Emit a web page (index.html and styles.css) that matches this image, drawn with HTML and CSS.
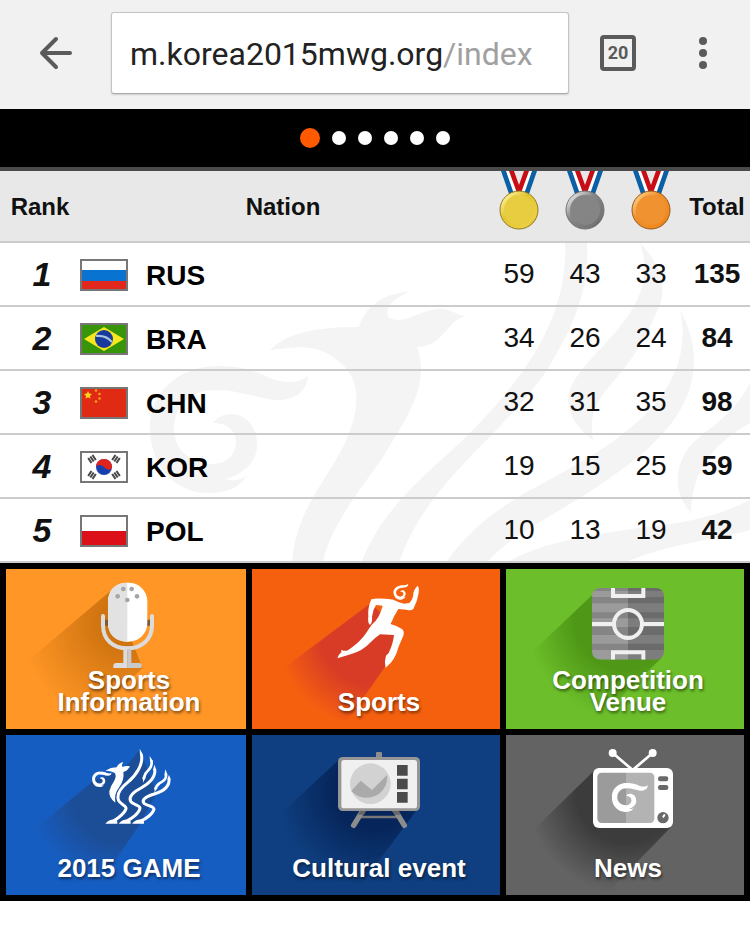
FILE: index.html
```html
<!DOCTYPE html>
<html lang="en">
<head>
    <meta charset="UTF-8">
    <meta name="viewport" content="width=device-width, initial-scale=1.0">
    <title>Korea 2015 MWG</title>
    <link rel="stylesheet" href="styles.css">
</head>
<body>
    <!-- shared swirl and medal ribbon shapes -->
    <svg class="defs" width="0" height="0" aria-hidden="true">
        <symbol id="swirl" viewBox="150 122 158 130">
            <path d="M308 133C300 140 285 141 270 135C250 125 230 121 205 124C170 130 150 155 150 185C150 222 175 250 208 250C228 250 240 244 246 233C240 238 230 238 226 236C245 230 258 218 257 200C256 180 243 171 231 171C223 171 216 175 213 180C228 180 236 188 236 199C236 212 226 221 213 221C190 221 174 206 174 186C174 162 192 147 215 147C240 147 255 155 275 157C295 158 307 148 308 133Z"/>
        </symbol>
        <symbol id="ribbon" viewBox="0 0 40 24">
            <path fill="#fff" d="M3 0H14L20 19L26 0H37L28 24H12Z"/>
            <path fill="#0b5fa5" d="M2 0H7L15 23H10ZM38 0H33L25 23H30Z"/>
            <path fill="#c80d14" d="M10 0H15L20 14L25 0H30L22 22H18Z"/>
        </symbol>
    </svg>

    <header class="toolbar">
        <button class="tool back" aria-label="Back">
            <svg width="34" height="34" viewBox="0 0 34 34" fill="none" stroke="#5a5a5a" stroke-width="4" stroke-linecap="round" stroke-linejoin="round">
                <path d="M31 17H3M17 3L3 17L17 31"/>
            </svg>
        </button>
        <label class="address">
            <input class="host" type="text" value="m.korea2015mwg.org" aria-label="Address">
            <span class="path">/index</span>
        </label>
        <button class="tool tabs" aria-label="Open tabs"><span class="count">20</span></button>
        <button class="tool menu" aria-label="Menu">
            <svg width="8" height="32" viewBox="0 0 8 32" fill="#5a5a5a">
                <circle cx="4" cy="4" r="4"/><circle cx="4" cy="16" r="4"/><circle cx="4" cy="28" r="4"/>
            </svg>
        </button>
    </header>

    <nav class="slider" aria-label="Slides">
        <button class="dot active" aria-label="Slide 1"></button>
        <button class="dot" aria-label="Slide 2"></button>
        <button class="dot" aria-label="Slide 3"></button>
        <button class="dot" aria-label="Slide 4"></button>
        <button class="dot" aria-label="Slide 5"></button>
        <button class="dot" aria-label="Slide 6"></button>
    </nav>

    <main>
        <div class="standings">
            <svg class="watermark" viewBox="0 0 750 320" fill="#f4f4f4" aria-hidden="true">
                <use href="#swirl" x="150" y="122" width="158" height="130"/>
                <path d="M270 107C285 92 310 84 359 84C364 66 380 51 411 48C392 56 385 64 388 74C403 84 420 66 440 66C452 66 458 73 466 73C446 77 444 104 417 104C430 140 410 170 383 214C350 260 328 290 323 320H292C295 270 325 240 343 204C362 165 365 128 324 109C308 102 295 104 270 107Z"/>
                <path d="M565 0H587C590 50 570 90 545 130C500 195 425 240 399 320H361C375 285 395 260 430 227C500 165 570 90 565 0Z"/>
                <path d="M640 0C664 25 668 50 656 70C640 110 620 130 604 150C592 165 590 180 593 197C573 183 566 165 569 150C580 110 665 70 640 0Z"/>
                <path d="M680 67C698 100 698 130 684 160C664 200 620 230 565 264C530 285 510 295 486 320H446C462 295 490 270 525 250C600 210 700 160 680 67Z"/>
                <path d="M750 140V180C715 200 692 225 691 270C678 255 672 235 684 212C695 190 730 180 750 140Z"/>
                <path d="M506 320C540 300 580 294 644 284C690 280 720 272 750 257V287C710 298 670 300 624 320Z"/>
            </svg>
            <table class="ranking">
                <colgroup>
                    <col class="col-rank"><col class="col-flag"><col>
                    <col class="col-num"><col class="col-num"><col class="col-num"><col class="col-num">
                </colgroup>
                <thead>
                    <tr>
                        <th>Rank</th>
                        <th colspan="2">Nation</th>
                        <th class="medal">
                            <svg width="40" height="60" viewBox="0 0 40 60" role="img" aria-label="Gold">
                                <defs><linearGradient id="gold" x1="0" y1="0" x2="1" y2="1"><stop offset="0.100" stop-color="#fff3a0"/><stop offset=".4" stop-color="#e2c532"/><stop offset=".8" stop-color="#ecd043"/><stop offset="1" stop-color="#b38a10"/></linearGradient></defs>
                                <use href="#ribbon" width="40" height="24"/>
                                <circle cx="20" cy="39" r="19" fill="url(#gold)" stroke="#8f7a22"/>
                                <circle cx="20" cy="39" r="15" fill="#e8cd40"/>
                            </svg>
                        </th>
                        <th class="medal">
                            <svg width="40" height="60" viewBox="0 0 40 60" role="img" aria-label="Silver">
                                <defs><linearGradient id="silver" x1="0" y1="0" x2="1" y2="1"><stop offset=".1" stop-color="#eee"/><stop offset=".4" stop-color="#888"/><stop offset=".8" stop-color="#757575"/><stop offset="1" stop-color="#444"/></linearGradient></defs>
                                <use href="#ribbon" width="40" height="24"/>
                                <circle cx="20" cy="39" r="19" fill="url(#silver)" stroke="#707070"/>
                                <circle cx="20" cy="39" r="15" fill="#858585"/>
                            </svg>
                        </th>
                        <th class="medal">
                            <svg width="40" height="60" viewBox="0 0 40 60" role="img" aria-label="Bronze">
                                <defs><linearGradient id="bronze" x1="0" y1="0" x2="1" y2="1"><stop offset=".1" stop-color="#ffd08a"/><stop offset=".4" stop-color="#f0902c"/><stop offset=".8" stop-color="#f08a20"/><stop offset="1" stop-color="#b85c08"/></linearGradient></defs>
                                <use href="#ribbon" width="40" height="24"/>
                                <circle cx="20" cy="39" r="19" fill="url(#bronze)" stroke="#96581c"/>
                                <circle cx="20" cy="39" r="15" fill="#f09230"/>
                            </svg>
                        </th>
                        <th>Total</th>
                    </tr>
                </thead>
                <tbody>
                    <tr>
                        <td class="rank">1</td>
                        <td class="flag">
                            <svg width="48" height="32" viewBox="0 0 48 32"><path fill="#fff" d="M0 0h48v11H0z"/><path fill="#0873d0" d="M0 11h48v11H0z"/><path fill="#e0281c" d="M0 22h48v10H0z"/><path fill="none" stroke="#777" stroke-width="2" d="M1 1h46v30H1z"/></svg>
                        </td>
                        <td class="name">RUS</td>
                        <td>59</td><td>43</td><td>33</td><td class="total">135</td>
                    </tr>
                    <tr>
                        <td class="rank">2</td>
                        <td class="flag">
                            <svg width="48" height="32" viewBox="0 0 48 32"><path fill="#389408" d="M0 0h48v32H0z"/><path fill="#f8e81c" d="M4 16L24 4L44 16L24 28z"/><circle cx="24" cy="16" r="9" fill="#173a9e"/><path fill="none" stroke="#a9c4dc" stroke-width="2" d="M16 13Q26 12 32 19"/><path fill="none" stroke="#777" stroke-width="2" d="M1 1h46v30H1z"/></svg>
                        </td>
                        <td class="name">BRA</td>
                        <td>34</td><td>26</td><td>24</td><td class="total">84</td>
                    </tr>
                    <tr>
                        <td class="rank">3</td>
                        <td class="flag">
                            <svg width="48" height="32" viewBox="0 0 48 32"><path fill="#e12a14" d="M0 0h48v32H0z"/><path fill="#ffd21c" d="M8 4l1.200 2.600 2.800.3-2.100 2 .6 2.800L8 10.300l-2.500 1.400.6-2.800-2.100-2 2.800-.3z"/><g fill="#f5a01a"><circle cx="16" cy="3.500" r="1.300"/><circle cx="19.500" cy="7" r="1.300"/><circle cx="19.500" cy="11.500" r="1.300"/><circle cx="16" cy="14.500" r="1.300"/></g><path fill="none" stroke="#777" stroke-width="2" d="M1 1h46v30H1z"/></svg>
                        </td>
                        <td class="name">CHN</td>
                        <td>32</td><td>31</td><td>35</td><td class="total">98</td>
                    </tr>
                    <tr>
                        <td class="rank">4</td>
                        <td class="flag">
                            <svg width="48" height="32" viewBox="0 0 48 32"><path fill="#fff" d="M0 0h48v32H0z"/><circle cx="24" cy="16" r="8" fill="#1740ae"/><path fill="#e3241c" d="M16 16A8 8 0 0 1 32 16C32 19 28 20 24 16C20 13 17 14 16 16z"/><g fill="none" stroke="#444" stroke-width="6" stroke-dasharray="2 .6"><path d="M9 10L15 6M33 6L39 10M9 22L15 26M33 26L39 22"/></g><path fill="none" stroke="#777" stroke-width="2" d="M1 1h46v30H1z"/></svg>
                        </td>
                        <td class="name">KOR</td>
                        <td>19</td><td>15</td><td>25</td><td class="total">59</td>
                    </tr>
                    <tr>
                        <td class="rank">5</td>
                        <td class="flag">
                            <svg width="48" height="32" viewBox="0 0 48 32"><path fill="#fff" d="M0 0h48v16H0z"/><path fill="#dc1018" d="M0 16h48v16H0z"/><path fill="none" stroke="#777" stroke-width="2" d="M1 1h46v30H1z"/></svg>
                        </td>
                        <td class="name">POL</td>
                        <td>10</td><td>13</td><td>19</td><td class="total">42</td>
                    </tr>
                </tbody>
            </table>
        </div>

        <nav class="tiles" aria-label="Sections">
            <a class="tile orange" href="#info">
                <svg class="art" viewBox="18 12 720 480" aria-hidden="true">
                    <defs><radialGradient id="sh1" gradientUnits="userSpaceOnUse" cx="380" cy="170" r="320"><stop offset=".25" stop-color="#d07410"/><stop offset="1" stop-color="#d07410" stop-opacity="0"/></radialGradient></defs>
                    <path fill="url(#sh1)" d="M335 75L18 343V492H230L428 309Z"/>
                    <path fill="#7c5a38" d="M312 164H330V182H312ZM436 164H454V182H436Z"/>
                    <path fill="none" stroke="#dcdcdc" stroke-width="12" stroke-linecap="round" d="M309 153V180C309 225 340 250 382 250S456 225 456 180V153"/>
                    <path fill="#dcdcdc" d="M370 252H382V309H340V300Q342 294 348 294H370Z"/>
                    <path fill="#c9c9c9" d="M382 252H394V294H418Q424 294 426 300L424 309H382Z"/>
                    <rect x="324" y="53" width="118" height="177" rx="56" fill="#fff"/>
                    <path fill="#e2e2e2" d="M382 53V230C345 230 324 208 324 174V109C324 75 345 53 382 53Z"/>
                    <g fill="#a5a5a5"><circle cx="370" cy="72" r="7"/><circle cx="395" cy="72" r="7"/><circle cx="353" cy="94" r="7"/><circle cx="411" cy="94" r="7"/><circle cx="382" cy="105" r="7"/></g>
                </svg>
                <span class="label">Sports<br>Information</span>
            </a>
            <a class="tile red" href="#sports">
                <svg class="art" viewBox="6 12 744 480" aria-hidden="true">
                    <defs><radialGradient id="sh2" gradientUnits="userSpaceOnUse" cx="370" cy="200" r="290"><stop offset=".55" stop-color="#d83c26"/><stop offset="1" stop-color="#d83c26" stop-opacity="0"/></radialGradient></defs>
                    <path fill="url(#sh2)" d="M362 115L6 380V492H275L405 305L440 190Z"/>
                    <g fill="#fff" transform="translate(240 30)">
                        <use href="#swirl" x="190" y="32" width="52" height="43" transform="rotate(-20 210 52)"/>
                        <path d="M124 73Q140 68 190 74Q205 82 222 86L238 84Q250 72 250 55Q254 38 264 32Q268 40 266 54Q262 80 250 102Q242 108 230 104L205 102Q192 122 182 147Q200 152 216 162Q224 168 220 182Q212 200 204 220Q200 240 184 262L167 278Q162 260 168 242L176 234Q190 205 192 180L150 178Q138 186 122 202Q98 228 62 238L22 250Q26 238 34 232V224Q44 230 54 226Q92 200 108 175Q120 155 128 146Q148 130 158 92L138 90Q128 105 126 125Q128 142 120 150Q112 142 115 125Q112 100 124 73Z"/>
                    </g>
                </svg>
                <span class="label">Sports</span>
            </a>
            <a class="tile green" href="#venue">
                <svg class="art" viewBox="18 12 714 480" aria-hidden="true">
                    <defs>
                        <radialGradient id="sh3" gradientUnits="userSpaceOnUse" cx="370" cy="170" r="290"><stop offset=".5" stop-color="#4f9817"/><stop offset="1" stop-color="#4f9817" stop-opacity="0"/></radialGradient>
                        <clipPath id="pitch"><rect x="276" y="69" width="216" height="215" rx="24"/></clipPath>
                    </defs>
                    <path fill="url(#sh3)" d="M282 85L18 335V492H265L485 278Z"/>
                    <g clip-path="url(#pitch)">
                        <path fill="#9b9b9b" d="M276 69H384V284H276Z"/>
                        <path fill="#7d7d7d" d="M384 69H492V284H384Z"/>
                        <path fill="#000" fill-opacity=".14" d="M276 69H492V78H276ZM276 96H492V115H276ZM276 142H492V160H276ZM276 186H492V210H276ZM276 236H492V255H276Z"/>
                        <g fill="none" stroke="#f0f0f0" stroke-width="12">
                            <path d="M276 177H342M426 177H492M339 69V93H430V69M339 284V262H430V284"/>
                            <circle cx="384" cy="177" r="42"/>
                        </g>
                    </g>
                </svg>
                <span class="label">Competition<br>Venue</span>
            </a>
            <a class="tile blue" href="#game">
                <svg class="art" viewBox="18 15 720 480" aria-hidden="true">
                    <defs><radialGradient id="sh4" gradientUnits="userSpaceOnUse" cx="370" cy="180" r="290"><stop offset=".55" stop-color="#1c4e98"/><stop offset="1" stop-color="#1c4e98" stop-opacity="0"/></radialGradient></defs>
                    <path fill="url(#sh4)" d="M280 152L18 370V495H275L420 282L470 190L420 58L370 120Z"/>
                    <use href="#swirl" x="276" y="124" width="59" height="48" fill="#fff"/>
                    <g transform="translate(258 42)">
                        <path fill="#fff" d="M58 80Q74 70 92 70Q98 57 112 54Q106 62 109 69Q120 64 132 67Q124 82 112 84Q116 108 98 132Q84 150 88 176Q68 162 70 142Q74 126 84 112Q92 98 87 88Q78 80 58 80Z"/>
                        <g fill="none" stroke="#fff" stroke-width="9">
                            <path d="M166 32C173 60 150 95 125 115C100 135 92 155 98 170C104 182 122 184 120 194C117 206 98 222 84 230"/>
                            <path d="M206 76C210 100 190 118 165 132C140 145 128 160 134 172C142 184 160 182 162 192C160 208 136 224 124 230"/>
                            <path d="M249 104C252 130 232 142 205 150C178 158 166 168 174 178C184 186 204 186 204 196C200 210 178 226 166 230"/>
                            <path stroke-width="8" d="M196 50C200 62 194 72 184 82C176 90 174 96 173 106"/>
                            <path stroke-width="8" d="M240 92C242 102 232 112 220 118C212 124 210 128 209 136"/>
                        </g>
                        <path fill="#fff" d="M161 14L171 32L162 34ZM191 36L201 52L192 54ZM205 62L211 78L201 78ZM238 76L245 93L235 94ZM249 92L254 106L244 106ZM170 100H178L172 116ZM205 130H213L206 146Z"/>
                        <path fill="#fff" d="M58 239Q68 226 90 225L94 233V239ZM98 239Q108 226 130 225L134 233V239ZM138 239Q148 226 170 225L174 233V239Z"/>
                    </g>
                </svg>
                <span class="label">2015 GAME</span>
            </a>
            <a class="tile navy" href="#culture">
                <svg class="art" viewBox="6 15 744 480" aria-hidden="true">
                    <defs><radialGradient id="sh5" gradientUnits="userSpaceOnUse" cx="370" cy="180" r="290"><stop offset=".4" stop-color="#06255a"/><stop offset="1" stop-color="#06255a" stop-opacity="0"/></radialGradient></defs>
                    <path fill="url(#sh5)" d="M266 90L6 330V495H310L463 290L500 240Z"/>
                    <path fill="none" stroke="#777" stroke-width="7" d="M325 261H450"/>
                    <path fill="none" stroke="#8d8d8d" stroke-width="16" stroke-linecap="round" d="M338 242L311 286M436 242L463 286"/>
                    <path fill="#666" d="M330 243H348L342 254H324ZM426 243H446L452 254H434Z"/>
                    <rect x="378" y="66" width="18" height="22" rx="3" fill="#8d8d8d"/>
                    <rect x="264" y="81" width="246" height="162" rx="14" fill="#969696"/>
                    <rect x="274" y="90" width="227" height="145" rx="8" fill="#f0f0f0"/>
                    <circle cx="361" cy="161" r="61" fill="#d2d2d2"/>
                    <path fill="#aaa" d="M304 182L332 152L366 180L411 135A61 61 0 0 1 304 182Z"/>
                    <path fill="#4b4b4b" d="M441 105H473V137H441ZM441 146H473V178H441ZM441 186H473V218H441Z"/>
                </svg>
                <span class="label">Cultural event</span>
            </a>
            <a class="tile gray" href="#news">
                <svg class="art" viewBox="18 15 714 480" aria-hidden="true">
                    <defs><radialGradient id="sh6" gradientUnits="userSpaceOnUse" cx="380" cy="190" r="300"><stop offset=".5" stop-color="#3c3c3c"/><stop offset="1" stop-color="#3c3c3c" stop-opacity="0"/></radialGradient></defs>
                    <path fill="url(#sh6)" d="M282 122L18 380V495H315L514 290Z"/>
                    <path fill="none" stroke="#fff" stroke-width="8" d="M338 69L398 120L458 69"/>
                    <circle cx="338" cy="69" r="12" fill="#fff"/><circle cx="458" cy="69" r="12" fill="#fff"/>
                    <rect x="279" y="114" width="240" height="180" rx="18" fill="#fff"/>
                    <path fill="#9b9b9b" d="M378 128H306Q292 128 292 142V265Q292 279 306 279H378Z"/>
                    <path fill="#b3b3b3" d="M378 128H449Q463 128 463 142V265Q463 279 449 279H378Z"/>
                    <use href="#swirl" x="335" y="158" width="109" height="89" fill="#fff"/>
                    <rect x="474" y="139" width="31" height="15" rx="7" fill="#696969"/>
                    <rect x="474" y="165" width="31" height="15" rx="7" fill="#696969"/>
                    <circle cx="489" cy="263" r="17" fill="#696969"/>
                    <path stroke="#fff" stroke-width="6" stroke-linecap="round" d="M490 260L493 255"/>
                </svg>
                <span class="label">News</span>
            </a>
        </nav>
    </main>
</body>
</html>
```

FILE: styles.css
```css
* {
    box-sizing: border-box;
}
body {
    margin: 0;
    background: #fff;
    color: #111;
    font-family: "Liberation Sans", Arial, sans-serif;
}
button {
    padding: 0;
    border: none;
    background: none;
    cursor: pointer;
}
svg {
    display: block;
}
.defs {
    position: absolute;
}

/* browser bar */
.toolbar {
    display: flex;
    align-items: center;
    padding: 12px 11px 15px 0;
    background: #f1f1f1;
}
.tool {
    display: flex;
    align-items: center;
    justify-content: center;
    height: 82px;
}
.back {
    width: 111px;
}
.tabs {
    width: 98px;
}
.menu {
    width: 72px;
}
.address {
    display: flex;
    flex: 1;
    align-items: center;
    min-width: 0;
    height: 82px;
    padding: 2px 18px 0;
    overflow: hidden;
    background: #fff;
    border: 1px solid #c4c4c4;
    border-bottom-color: #aaa;
    border-radius: 3px;
    box-shadow: 0 1px 2px rgba(0,0,0,0.15);
    font-family: Roboto, sans-serif;
    font-size: 32px;
}
.host {
    width: 313px;
    padding: 0;
    border: none;
    outline: none;
    background: none;
    color: #222;
    font: inherit;
}
.path {
    color: #a0a0a0;
}
.count {
    width: 36px;
    height: 36px;
    border: 4px solid #5a5a5a;
    border-radius: 4px;
    color: #5a5a5a;
    font-family: Roboto, sans-serif;
    font-size: 18px;
    font-weight: bold;
    line-height: 28px;
}

/* slider dots */
.slider {
    display: flex;
    align-items: center;
    justify-content: center;
    gap: 12px;
    height: 62px;
    padding-bottom: 1px;
    background: #000;
    border-bottom: 4px solid #4a4a4a;
}
.dot {
    width: 14px;
    height: 14px;
    border-radius: 50%;
    background: #fff;
}
.dot.active {
    width: 20px;
    height: 20px;
    background: #ff5a00;
}

/* medal table */
.standings {
    display: grid;
}
.watermark {
    grid-area: 1 / 1;
    align-self: end;
    width: 100%;
}
.ranking {
    grid-area: 1 / 1;
    width: 100%;
    table-layout: fixed;
    border-spacing: 0;
    z-index: 1;
}
.col-rank {
    width: 80px;
}
.col-flag,
.col-num {
    width: 66px;
}
.ranking th {
    height: 72px;
    padding: 2px 0 0;
    background: #e8e8e8;
    border-bottom: 2px solid #ccc;
    font-size: 24px;
}
.ranking .medal {
    padding: 0;
    vertical-align: top;
}
.medal svg {
    margin: 0 auto;
}
.ranking td {
    height: 64px;
    padding: 0;
    border-bottom: 2px solid #ccc;
    font-size: 28px;
    text-align: center;
}
.ranking .rank {
    padding-left: 4px;
    font-size: 34px;
    font-style: italic;
    font-weight: bold;
}
.ranking .name {
    padding-top: 4px;
    color: #000;
    font-weight: bold;
    text-align: left;
}
.ranking .flag {
    padding-top: 2px;
}
.ranking .total {
    font-weight: bold;
}

/* menu tiles */
.tiles {
    display: grid;
    grid-template-columns: 240fr 248fr 238fr;
    gap: 6px;
    padding: 6px;
    background: #000;
}
.tile {
    display: grid;
    overflow: hidden;
    color: #fff;
    text-decoration: none;
}
.art {
    grid-area: 1 / 1;
    width: 100%;
    height: 160px;
}
.label {
    grid-area: 1 / 1;
    align-self: end;
    padding: 0 0 16px 6px;
    font-size: 26px;
    font-weight: bold;
    line-height: 22px;
    text-align: center;
    text-shadow: 1px 2px 3px rgba(0,0,0,0.5);
    z-index: 1;
}
.orange {
    background: #ff9626;
}
.red {
    background: #f5600f;
}
.green {
    background: #6cbf2a;
}
.blue {
    background: #165dc2;
}
.navy {
    background: #0f3f80;
}
.gray {
    background: #636363;
}
```
